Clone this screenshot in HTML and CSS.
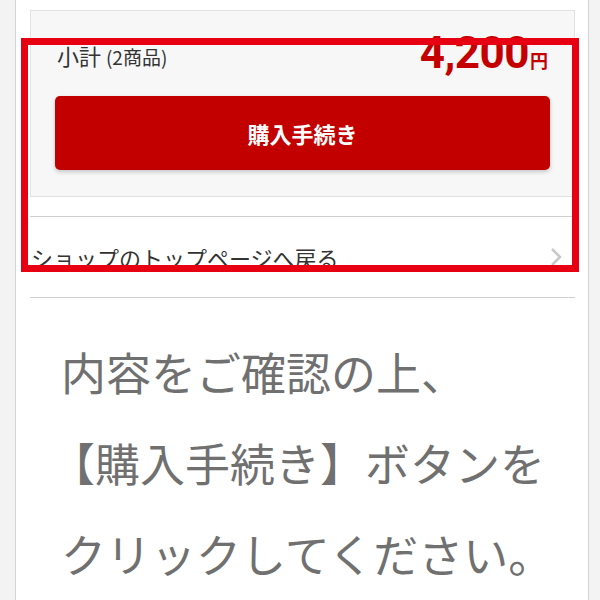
FILE: index.html
```html
<!DOCTYPE html>
<html lang="ja">
<head>
  <meta charset="UTF-8" />
  <meta name="viewport" content="width=device-width, initial-scale=1.0"/>
  <title>ショッピングカート</title>
  <link rel="stylesheet" href="styles.css">
</head>
<body>
  <div class="page">
    <div class="cart-box">
      <div class="cart-summary">
        <div class="subtotal">
          <span class="subtotal-label">小計 <small>(2商品)</small></span>
          <span class="subtotal-price">4,200<small>円</small></span>
        </div>
        <button class="checkout-btn">購入手続き</button>
      </div>
      <a href="#" class="back-link">
        <span>ショップのトップページへ戻る</span>
        <svg class="chevron" width="12" height="20" viewBox="0 0 12 20">
          <polyline points="2,2 10,10 2,18" fill="none" stroke="#c8c8c8" stroke-width="2.5"/>
        </svg>
      </a>
    </div>

    <p class="note">内容をご確認の上、<br><span class="pull">【購入手続き】ボタンを</span><br>クリックしてください。</p>

    <div class="highlight"></div>
  </div>
</body>
</html>
```

FILE: styles.css
```css
:root {
  --red: #c40000;
  --mark: #e60012;
  --line: #cfcfcf;
  --text: #333;
  --note: #707070;
}

* {
  margin: 0;
  padding: 0;
  box-sizing: border-box;
  font-family: "Noto Sans CJK JP", "Noto Sans", sans-serif;
}

body {
  background-color: #f3f3f3;
  height: 600px;
  overflow: hidden;
}

.page {
  position: relative;
  margin: 0 11px 0 15px;
  min-height: 600px;
  background-color: #fff;
  border-left: 1px solid #d4d4d4;
  border-right: 1px solid #d4d4d4;
}

.cart-box {
  padding: 10px 13px 0 14px;
}

.cart-summary {
  background-color: #f7f7f7;
  border: 1px solid #e2e2e2;
  padding: 0 24px 26px 24px;
  margin-bottom: 19px;
}

.subtotal {
  display: flex;
  justify-content: space-between;
  align-items: flex-start;
  height: 85px;
  padding: 0 2px;
}

.subtotal-label {
  margin-top: 33px;
  font-size: 22px;
  line-height: 1;
  color: var(--text);
}

.subtotal-label small {
  font-size: 19px;
}

.subtotal-price {
  margin-top: 20px;
  font-family: Roboto, "Noto Sans", sans-serif;
  font-weight: 700;
  font-size: 44px;
  letter-spacing: -0.5px;
  line-height: 1;
  color: var(--red);
}

.subtotal-price small {
  font-family: "Noto Sans CJK JP", sans-serif;
  font-size: 18px;
  letter-spacing: 0;
  margin-left: 1px;
}

.checkout-btn {
  display: block;
  width: 100%;
  height: 74px;
  border: none;
  border-radius: 5px;
  background-color: #c30000;
  color: #fff;
  font-size: 22px;
  font-weight: 700;
  box-shadow: 0 2px 4px rgba(0, 0, 0, 0.2);
  cursor: pointer;
}

.back-link {
  display: flex;
  justify-content: space-between;
  align-items: center;
  height: 82px;
  padding: 0 13px 0 1px;
  border-top: 1px solid var(--line);
  border-bottom: 1px solid var(--line);
  color: var(--text);
  text-decoration: none;
  font-size: 22px;
}

.note {
  padding: 28px 20px 0 45px;
  font-size: 45px;
  line-height: 91px;
  color: var(--note);
  white-space: nowrap;
}

.note .pull {
  margin-left: -11px;
}

.highlight {
  position: absolute;
  left: 5px;
  top: 38px;
  width: 558px;
  height: 234px;
  border: 7px solid var(--mark);
}
```
